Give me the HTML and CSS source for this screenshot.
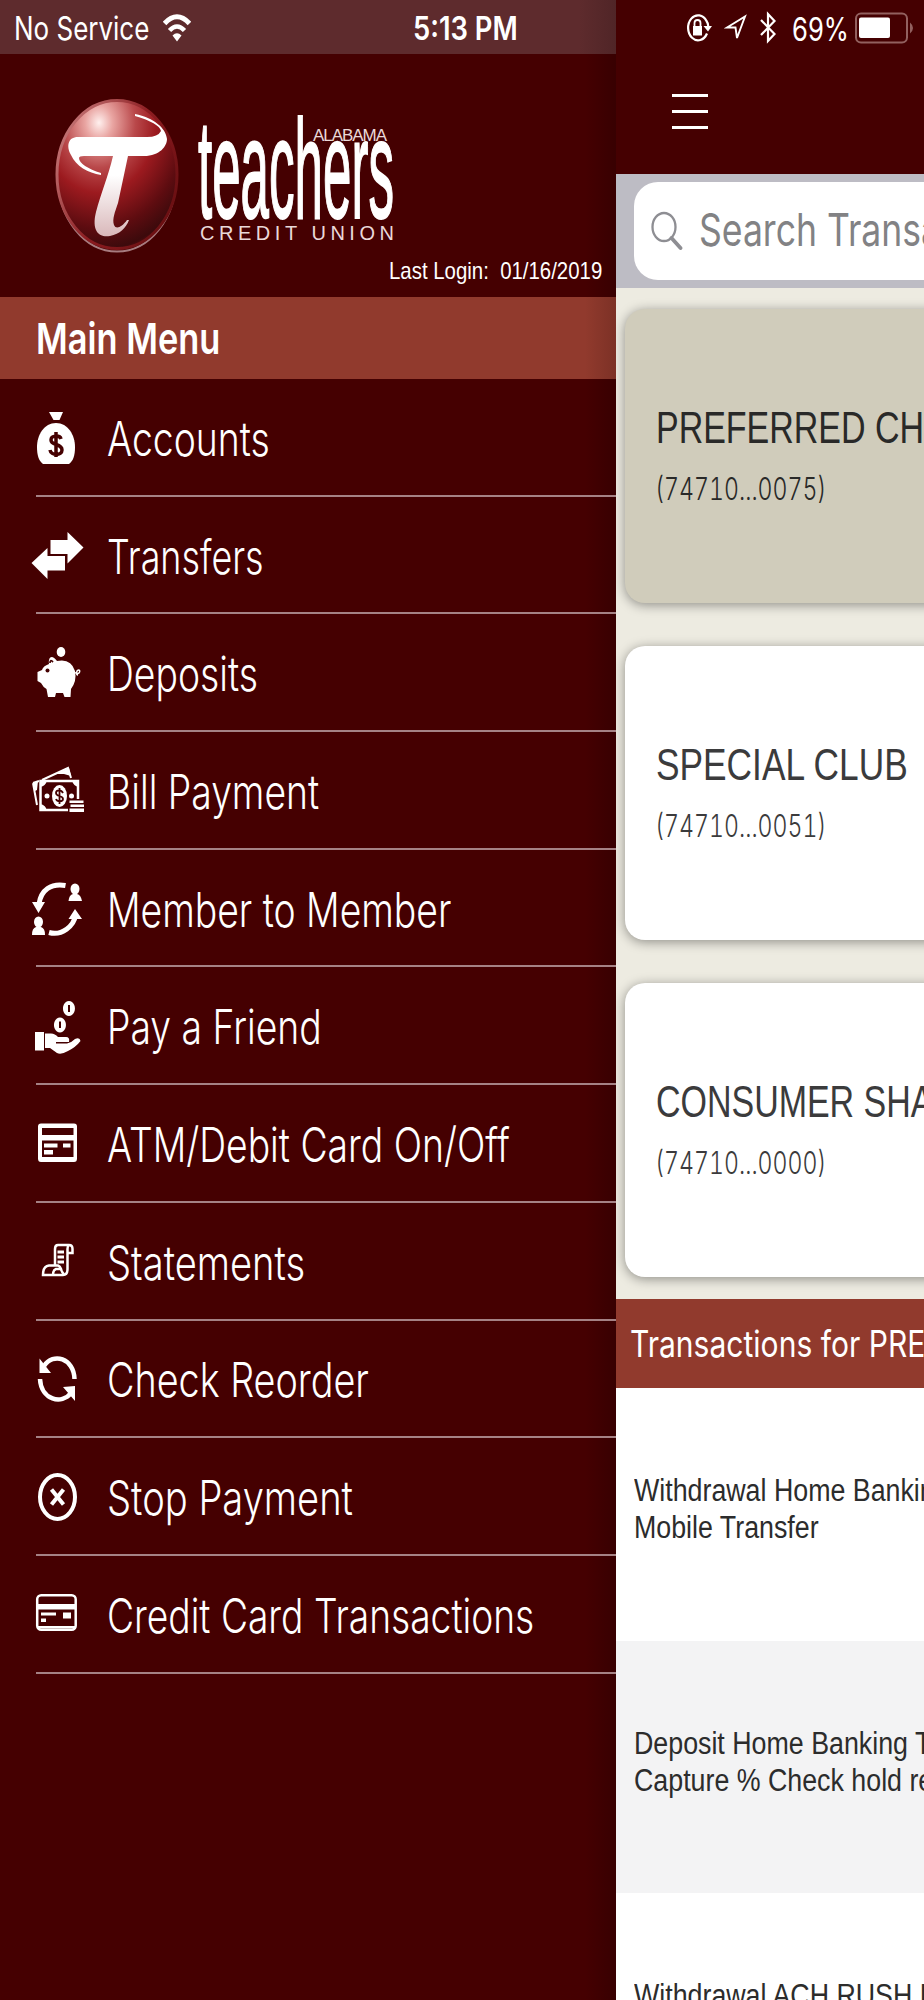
FILE: index.html
```html
<!DOCTYPE html>
<html lang="en">
<head>
    <meta charset="UTF-8">
    <meta name="viewport" content="width=device-width, initial-scale=1.0">
    <title>Alabama Teachers Credit Union</title>
    <link rel="stylesheet" href="styles.css">
</head>
<body>
    <div class="app">
        <nav class="drawer">
            <div class="status-left">
                <span class="carrier"><span class="fit">No Service</span></span>
                <svg class="wifi" width="28" height="28" viewBox="0 0 28 28">
                    <path d="M1.500 9.500Q14 -4 26.500 9.500" fill="none" stroke="#fff" stroke-width="5"/>
                    <path d="M6.500 16.500Q14 8.500 21.500 16.500" fill="none" stroke="#fff" stroke-width="4.500"/>
                    <path d="M14 27.500L9.500 21.500Q14 17 18.500 21.500Z" fill="#fff"/>
                </svg>
                <span class="clock"><span class="fit">5:13 PM</span></span>
            </div>

            <header class="brand">
                <svg class="logo" width="390" height="174" viewBox="0 0 390 174">
                    <defs>
                        <radialGradient id="ball" cx="0.35" cy="0.15" r="0.95">
                            <stop offset="0" stop-color="#fff0ee"/>
                            <stop offset="0.12" stop-color="#e9a5a2"/>
                            <stop offset="0.32" stop-color="#b9484a"/>
                            <stop offset="0.5" stop-color="#9c1a1f"/>
                            <stop offset="0.75" stop-color="#5d0c10"/>
                            <stop offset="0.9" stop-color="#3c0a0c"/>
                            <stop offset="1" stop-color="#7a1014"/>
                        </radialGradient>
                        <linearGradient id="rim" x1="0" y1="0" x2="1" y2="0.6">
                            <stop offset="0" stop-color="#d08a8a"/>
                            <stop offset="0.6" stop-color="#8c1c20"/>
                            <stop offset="1" stop-color="#6d1013"/>
                        </linearGradient>
                        <linearGradient id="stem" x1="0" y1="0" x2="0" y2="1">
                            <stop offset="0.5" stop-color="#fff"/>
                            <stop offset="1" stop-color="#d9b8ba"/>
                        </linearGradient>
                    </defs>
                    <ellipse cx="87" cy="97.500" rx="59" ry="74" fill="none" stroke="#a77b7f" stroke-width="2"/>
                    <ellipse cx="87" cy="94.500" rx="60" ry="74" fill="url(#ball)" stroke="url(#rim)" stroke-width="3"/>
                    <path d="M105 36Q129 43 131 51Q128 57 117 57H48C38 57 36 66 41 75C46 86 58 93 71 95V93C58 89 49 83 49 78Q49 76 54 76H83C78 97 71 113 66 132C61 152 70 158 80 156C90 154 96 148 99 140L97 140C92 147 86 150 84 145C82 139 85 132 88 123L98 76H114C130 76 137 66 137 59C136 48 124 38 105 34Z" fill="url(#stem)"/>
                    <g class="logo-text">
                        <text class="logo-name" x="168" y="138" textLength="196" lengthAdjust="spacingAndGlyphs">teachers</text>
                        <text class="logo-state" x="283" y="60.500" textLength="74" lengthAdjust="spacing">ALABAMA</text>
                        <text class="logo-type" x="170" y="159.500" textLength="194" lengthAdjust="spacing">CREDIT UNION</text>
                    </g>
                </svg>
                <p class="last-login"><span class="fit">Last Login:&nbsp; 01/16/2019</span></p>
            </header>

            <h1 class="menu-title"><span class="fit">Main Menu</span></h1>

            <ul class="menu">
                <li class="menu-item">
                    <svg class="icon" viewBox="0 0 56 60">
                        <path d="M17 4H31L27.500 12H21.500Z"/>
                        <path fill-rule="evenodd" d="M24 15C36 15 43 27 43 39C43 48 41 53 37 56H11C7 53 5 48 5 39C5 27 12 15 24 15Z"/>
                        <path class="cut-line" d="M29 31C28 27 19 27 19 32C19 38 30 35 30 42C30 48 19 48 18 42M24 24V49"/>
                    </svg>
                    <span class="label"><span class="fit">Accounts</span></span>
                </li>
                <li class="menu-item">
                    <svg class="icon" viewBox="0 0 56 60">
                        <path d="M18.500 14H35.500V6L51.500 21.500L35.500 37.500V28H18.500Z"/>
                        <path d="M-0.500 37L15.500 22V30H33V44.500H15.500V53Z"/>
                    </svg>
                    <span class="label"><span class="fit">Transfers</span></span>
                </li>
                <li class="menu-item">
                    <svg class="icon" viewBox="0 0 56 60">
                        <ellipse cx="29" cy="8" rx="4.300" ry="5"/>
                        <path d="M17 20C16 13 20 10 25 17Q39 14 43 27Q45 37 39 45L38.500 53H32.500L31 49H24L23 53H16L14.500 45Q11 43 9 39L5.500 37V28L10 26Q11 22 17 20Z"/>
                        <circle class="cut" cx="15.500" cy="26.500" r="2"/>
                        <path class="cut-line thin" d="M18 19Q18 15 21 18"/>
                        <path class="line" stroke-width="1.500" d="M42 28C49 33 49 23 45 27C44 30 45 31 46 31"/>
                    </svg>
                    <span class="label"><span class="fit">Deposits</span></span>
                </li>
                <li class="menu-item">
                    <svg class="icon" viewBox="0 0 56 60">
                        <path class="line" stroke-width="2" d="M1 22L5 44M1 22L7 20M10 19L36 7L39 17"/>
                        <path d="M1 22L6 20L5 29L3 30ZM24 13L37 7L39 15L32 13Z"/>
                        <rect class="line" stroke-width="2.500" x="8.500" y="20" width="37.500" height="29"/>
                        <path d="M8 19H15Q14 25 8 26ZM47 19H40Q41 25 47 26ZM8 50H15Q14 44 8 43Z"/>
                        <ellipse cx="27.500" cy="35" rx="7.500" ry="11"/>
                        <circle cx="15" cy="35" r="2.500"/><circle cx="39.500" cy="35" r="2.500"/>
                        <path class="cut-line thin" d="M31 32C29 28 24 29 24 32C24 36 31 34 31 38C31 41 25 41 24 38M27.500 27V43"/>
                        <path class="cut" d="M36 38H53V52H36Z"/>
                        <path d="M37.500 39.500H51.500V42H37.500ZM38.500 43.500H52V46H38.500ZM37.500 47.500H52V51H37.500Z"/>
                    </svg>
                    <span class="label"><span class="fit">Bill Payment</span></span>
                </li>
                <li class="menu-item">
                    <svg class="icon" viewBox="0 0 56 60">
                        <path class="line" stroke-width="5" d="M33.500 6.500C19 4 9 11 7 25M17 53.500C30 57 42 47 43.500 36"/>
                        <path d="M0 23H13L6.500 34ZM36.500 40L43 30L50 40Z"/>
                        <ellipse cx="43" cy="10" rx="4.500" ry="5.500"/><path d="M36.500 22Q37 16 41 15H45Q49 16 50 22Z"/>
                        <ellipse cx="6.500" cy="43" rx="4.500" ry="5.500"/><path d="M0 56Q0 49 4 48H9Q13 49 13 56Z"/>
                    </svg>
                    <span class="label"><span class="fit">Member to Member</span></span>
                </li>
                <li class="menu-item">
                    <svg class="icon" viewBox="0 0 56 60">
                        <path fill-rule="evenodd" d="M37 4A6 7.500 0 1 1 36.900 4ZM36 8V15H38V8ZM28 20.500A6 7.500 0 1 1 27.900 20.500ZM27 24.500V31H29V24.500Z"/>
                        <path d="M3 35H12V53.500H3ZM13 36.500H19Q23 36.500 26 40H34Q38 40 37 45H24V46.500H35Q39 46 43 42Q48 40 48.500 44Q44 50 36 54Q29 58 25 56L18 51H13Z"/>
                    </svg>
                    <span class="label"><span class="fit">Pay a Friend</span></span>
                </li>
                <li class="menu-item">
                    <svg class="icon" viewBox="0 0 56 60">
                        <path fill-rule="evenodd" d="M9 9.500H42Q45 9.500 45 12.500V44.500Q45 48 42 48H9Q6 48 6 44.500V12.500Q6 9.500 9 9.500ZM10 14V21H41.500V14ZM10 26.500V43H41.500V26.500Z"/>
                        <path d="M12 29.500H25.500V33.500H12ZM31 29.500H38.500V33.500H31ZM12 36H21V40.500H12Z"/>
                    </svg>
                    <span class="label"><span class="fit">ATM/Debit Card On/Off</span></span>
                </li>
                <li class="menu-item">
                    <svg class="icon" viewBox="0 0 56 60">
                        <path class="line" stroke-width="2.500" d="M23 33V17Q23 13 26 13H37Q40.500 13 40.500 17V21H35.500V37Q35.500 43 31 43H11Q11 34 17 33.500H26Q28 34 29 37Q30 41 32 42M35.500 22V17Q35.500 14 37 13M21 43Q21 38 24 37H29"/>
                        <path class="line" stroke-width="2.800" d="M25.500 20H32M25.500 25H32M25.500 30H32"/>
                    </svg>
                    <span class="label"><span class="fit">Statements</span></span>
                </li>
                <li class="menu-item">
                    <svg class="icon" viewBox="0 0 56 60">
                        <path class="line" stroke-width="4.500" d="M42.500 29C42 8 21 2 12 16M8 29C9 50 30 55 39 43"/>
                        <path d="M7.500 8.500V23H19ZM43 36V51L31 37Z"/>
                    </svg>
                    <span class="label"><span class="fit">Check Reorder</span></span>
                </li>
                <li class="menu-item">
                    <svg class="icon" viewBox="0 0 56 60">
                        <ellipse class="line" stroke-width="4" cx="25.500" cy="29" rx="17.500" ry="22"/>
                        <path class="line" stroke-width="4" d="M19.500 21.500L31.500 36.500M31.500 21.500L19.500 36.500"/>
                    </svg>
                    <span class="label"><span class="fit">Stop Payment</span></span>
                </li>
                <li class="menu-item">
                    <svg class="icon" viewBox="0 0 56 60">
                        <rect class="line" stroke-width="2.500" x="5.200" y="10.200" width="38.500" height="34.500" rx="4"/>
                        <path d="M5 19H44V24.500H5ZM9 27.500H24V30.500H9ZM9 33.500H14V37H9ZM31 27.500H39V33.500H31ZM5 41H44V43.500H5Z"/>
                    </svg>
                    <span class="label"><span class="fit">Credit Card Transactions</span></span>
                </li>
            </ul>
        </nav>

        <main class="content">
            <div class="topbar">
                <div class="status-right">
                    <svg width="28" height="30" viewBox="0 0 28 30">
                        <path d="M22 20.500A10 12.500 0 1 1 21.500 8Q23 10 23.200 13" fill="none" stroke="#fff" stroke-width="2.200"/>
                        <path d="M18.500 13H27L23 18.500Z" fill="#fff"/>
                        <path d="M8 13H17V22.500H8Z" fill="#fff"/>
                        <path d="M9.500 13V10Q9.500 7 12.500 7Q15.500 7 15.500 10V13" fill="none" stroke="#fff" stroke-width="1.800"/>
                    </svg>
                    <svg width="24" height="30" viewBox="0 0 24 30">
                        <path d="M3 14.500L21 3.500L13 25L11.500 14.500Z" fill="none" stroke="#fff" stroke-width="1.900"/>
                    </svg>
                    <svg width="18" height="34" viewBox="0 0 18 34">
                        <path d="M2 9L15.500 23L9 30V3L15.500 10L2 24" fill="none" stroke="#fff" stroke-width="2.200"/>
                    </svg>
                    <span class="battery-level"><span class="fit">69%</span></span>
                    <svg width="60" height="32" viewBox="0 0 60 32">
                        <rect x="1" y="1.500" width="51" height="29" rx="5" fill="none" stroke="#92605f" stroke-width="2"/>
                        <rect x="4" y="5.500" width="31" height="20.500" rx="2" fill="#fff"/>
                        <path d="M55 10.500Q58 13 58 16Q58 19 55 21.500Z" fill="#92605f"/>
                    </svg>
                </div>
                <div class="hamburger"><i></i><i></i><i></i></div>
            </div>

            <div class="search">
                <div class="search-box">
                    <svg class="search-icon" width="32" height="40" viewBox="0 0 32 40">
                        <ellipse cx="13" cy="16" rx="11.500" ry="14" fill="none" stroke="#8e8e93" stroke-width="2.300"/>
                        <path d="M20.500 27L29.500 37" stroke="#8e8e93" stroke-width="3.800" stroke-linecap="round"/>
                    </svg>
                    <span class="placeholder"><span class="fit">Search Transactions</span></span>
                </div>
            </div>

            <section class="accounts">
                <article class="card selected">
                    <h2 class="card-name"><span class="fit">PREFERRED CHECKING</span></h2>
                    <p class="card-number"><span class="fit">(74710...0075)</span></p>
                </article>
                <article class="card">
                    <h2 class="card-name"><span class="fit">SPECIAL CLUB</span></h2>
                    <p class="card-number"><span class="fit">(74710...0051)</span></p>
                </article>
                <article class="card">
                    <h2 class="card-name"><span class="fit">CONSUMER SHARE</span></h2>
                    <p class="card-number"><span class="fit">(74710...0000)</span></p>
                </article>
            </section>

            <h2 class="list-title"><span class="fit">Transactions for PREFERRED CHECKING</span></h2>

            <div class="transaction"><p><span class="fit">Withdrawal Home Banking<br>Mobile Transfer</span></p></div>
            <div class="transaction alt"><p><span class="fit">Deposit Home Banking Transfer<br>Capture % Check hold released</span></p></div>
            <div class="transaction"><p><span class="fit">Withdrawal ACH RUSH PAYMENT<br>Card</span></p></div>
        </main>
    </div>
</body>
</html>
```
FILE: styles.css
```css
* {
    box-sizing: border-box;
}

body {
    margin: 0;
    font-family: "Liberation Sans", Arial, sans-serif;
    background: #450001;
    color: #fff;
}

h1, h2, p, ul {
    margin: 0;
    padding: 0;
    font-weight: normal;
}

.app {
    display: flex;
    width: 924px;
    height: 2000px;
    overflow: hidden;
}

/* The type is condensed horizontally */
.fit {
    display: inline-block;
    white-space: nowrap;
    transform-origin: 0 50%;
}

/* Drawer */
.drawer {
    width: 616px;
    flex: none;
    display: flex;
    flex-direction: column;
    background: linear-gradient(90deg, #450001 95%, #380001);
}

.status-left {
    height: 54px;
    display: flex;
    align-items: center;
    padding: 2px 0 0 14px;
    background: linear-gradient(90deg, #5e2b2d 94%, #502527);
    font-family: Inter, sans-serif;
    font-size: 32px;
    line-height: 54px;
}

.carrier {
    width: 149px;
    padding-top: 2px;
}

.carrier .fit {
    transform: scaleX(0.812);
}

.clock {
    margin-left: 222px;
    padding-top: 2px;
    font-weight: 600;
}

.clock .fit {
    transform: scaleX(0.855);
}

.brand {
    height: 243px;
    display: flex;
    flex-direction: column;
    padding: 26px 14px 0 30px;
}

.logo {
    flex: none;
}

.logo-text {
    fill: #fff;
    font-family: "Liberation Sans", Arial, sans-serif;
}

.logo-name {
    font-size: 141px;
    stroke: #fff;
    stroke-width: 2px;
}

.logo-state {
    font-size: 17px;
    fill: #ead9d9;
}

.logo-type {
    font-size: 20px;
    fill: #ead9d9;
}

.last-login {
    align-self: flex-start;
    margin-left: 359px;
    margin-top: 2px;
    font-size: 24px;
    line-height: 30px;
}

.last-login .fit {
    transform: scaleX(0.85);
}

.menu-title {
    height: 82px;
    padding-left: 36px;
    background: linear-gradient(90deg, #913a2d 95%, #7c3126);
    font-family: Inter, sans-serif;
    font-weight: 600;
    font-size: 43px;
    line-height: 82px;
}

.menu-title .fit {
    transform: scaleX(0.8);
}

.menu {
    list-style: none;
}

.menu-item {
    height: 117.700px;
    margin-left: 36px;
    display: flex;
    align-items: center;
    border-bottom: 2px solid #a58285;
}

.icon {
    width: 56px;
    height: 60px;
    margin: 3px 19px 0 -4px;
    flex: none;
    fill: #fff;
    overflow: visible;
}

.icon .line {
    fill: none;
    stroke: #fff;
}

.icon .cut {
    fill: #450001;
}

.icon .cut-line {
    fill: none;
    stroke: #450001;
    stroke-width: 3.500px;
}

.icon .thin {
    stroke-width: 1.800px;
}

.label {
    padding-top: 4px;
    font-family: Inter, sans-serif;
    font-weight: 300;
    font-size: 48px;
    line-height: 60px;
}

.label .fit {
    transform: scaleX(0.777);
}

.menu-item:nth-child(2) .fit {
    transform: scaleX(0.747);
}

.menu-item:nth-child(8) .fit,
.menu-item:nth-child(10) .fit {
    transform: scaleX(0.794);
}

.menu-item:nth-child(9) .fit {
    transform: scaleX(0.786);
}

.menu-item:nth-child(11) .fit {
    transform: scaleX(0.774);
}

/* Content behind the drawer */
.content {
    width: 308px;
    flex: none;
    overflow: hidden;
    background: #edebe1;
}

.topbar {
    height: 174px;
    background: #450001;
}

.status-right {
    display: flex;
    align-items: center;
    height: 54px;
    padding: 2px 0 0 69px;
    font-family: Inter, sans-serif;
    font-size: 32px;
}

.status-right svg {
    flex: none;
    margin-right: 11px;
}

.battery-level {
    width: 63px;
    margin-left: 4px;
    padding-top: 2px;
    flex: none;
}

.battery-level .fit {
    transform: scaleX(0.8);
}

.hamburger {
    width: 36px;
    margin: 40px 0 0 56px;
    display: flex;
    flex-direction: column;
    gap: 13px;
}

.hamburger i {
    height: 3px;
    background: #fff;
}

.search {
    height: 114px;
    padding: 8px 0 8px 18px;
    background: #bdbcc4;
}

.search-box {
    width: 400px;
    height: 98px;
    display: flex;
    align-items: center;
    padding-left: 17px;
    border-radius: 24px;
    background: #fff;
}

.search-icon {
    flex: none;
}

.placeholder {
    margin-left: 16px;
    padding-bottom: 4px;
    color: #828284;
    font-family: Inter, sans-serif;
    font-size: 45px;
}

.placeholder .fit {
    transform: scaleX(0.79);
}

.accounts {
    display: flex;
    flex-direction: column;
    gap: 43px;
    padding: 21px 0 22px 9px;
}

.card {
    width: 500px;
    height: 294px;
    padding: 94px 0 0 31px;
    border-radius: 20px;
    background: #fff;
    color: #3b3b3c;
    box-shadow: 0 2px 12px rgba(0, 0, 0, 0.4);
}

.card.selected {
    background: #d0ccbb;
    color: #292928;
}

.card-name {
    font-size: 44px;
    line-height: 50px;
}

.card-name .fit {
    transform: scaleX(0.772);
}

.card:nth-child(2) .card-name .fit {
    transform: scaleX(0.802);
}

.card-number {
    margin: 16px 0 0 -1px;
    font-family: Inter, sans-serif;
    font-weight: 300;
    font-size: 31px;
    font-variant-numeric: tabular-nums;
    line-height: 40px;
}

.card-number .fit {
    transform: scaleX(0.747);
}

.list-title {
    height: 89px;
    padding-left: 14px;
    background: #913a2d;
    font-family: Inter, sans-serif;
    font-size: 37px;
    line-height: 89px;
}

.list-title .fit {
    transform: scaleX(0.812);
}

.transaction {
    height: 252.500px;
    display: flex;
    align-items: center;
    padding: 0 0 10px 18px;
    background: #fff;
    color: #2c2c2c;
    font-size: 31px;
    line-height: 37px;
}

.transaction.alt {
    background: #f3f3f4;
}

.transaction .fit {
    transform: scaleX(0.864);
}
```
